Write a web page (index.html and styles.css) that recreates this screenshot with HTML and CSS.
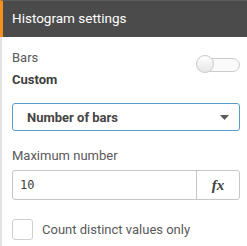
FILE: index.html
```html
<!DOCTYPE html>
<html>
<head>
<meta charset="utf-8">
<link rel="stylesheet" href="styles.css">
</head>
<body>
<div class="panel">
  <div class="header">Histogram settings</div>
  <div class="content">
    <div class="row-toggle">
      <div class="toggle-labels">
        <div class="label">Bars</div>
        <div class="value">Custom</div>
      </div>
      <div class="toggle">
        <div class="track"></div>
        <div class="knob"></div>
      </div>
    </div>
    <div class="select">
      <span class="select-text">Number of bars</span>
      <svg class="caret" width="9" height="5" viewBox="0 0 9 5"><path d="M0 0H9L4.5 5Z" fill="#595959"/></svg>
    </div>
    <div class="label max-label">Maximum number</div>
    <div class="input">
      <span class="input-text">10</span>
      <span class="fx">fx</span>
    </div>
    <div class="check-row">
      <span class="checkbox"></span>
      <span class="check-label">Count distinct values only</span>
    </div>
  </div>
</div>
</body>
</html>
```
FILE: styles.css
```css
html, body {
  margin: 0;
  padding: 0;
  background: #ffffff;
}
body {
  font-family: Roboto, "Noto Sans", sans-serif;
  width: 247px;
  height: 246px;
  overflow: hidden;
}
.panel {
  height: 246px;
  border-left: 2px solid #e3e3e3;
  box-sizing: border-box;
}
.header {
  margin-left: -2px;
  height: 37px;
  background: #4b4b4b;
  border-left: 3px solid #f4901e;
  border-top: 1px solid #5c5c5c;
  box-sizing: border-box;
  color: #ffffff;
  font-size: 13.5px;
  line-height: 34px;
  padding-left: 9px;
}
.content {
  padding: 12px 7px 0 10px;
}
.row-toggle {
  display: flex;
  justify-content: space-between;
  align-items: flex-start;
}
.label {
  font-size: 13px;
  color: #595959;
  line-height: 17px;
}
.value {
  font-size: 13px;
  font-weight: bold;
  color: #404040;
  line-height: 17px;
  margin-top: 5px;
}
.toggle {
  position: relative;
  width: 44px;
  height: 19px;
  margin-top: 6px;
}
.track {
  position: absolute;
  left: 8px;
  top: 3px;
  width: 34px;
  height: 12px;
  border: 1px solid #cccccc;
  border-radius: 7px;
  background: #fafafa;
}
.knob {
  position: absolute;
  left: 0;
  top: 0;
  width: 18px;
  height: 18px;
  border-radius: 50%;
  border: 1px solid #c8c8c8;
  box-sizing: border-box;
  background: linear-gradient(#ffffff, #e6e6e6);
}
.select {
  margin-top: 15px;
  height: 28px;
  border: 1px solid #5b9ccb;
  border-radius: 3px;
  box-sizing: border-box;
  display: flex;
  align-items: center;
  justify-content: space-between;
  padding: 0 10px 0 14px;
}
.select-text {
  font-size: 13px;
  font-weight: bold;
  color: #454545;
}
.max-label {
  margin-top: 16px;
}
.input {
  margin-top: 6px;
  height: 30px;
  border: 1px solid #c6c6c6;
  border-radius: 3px;
  box-sizing: border-box;
  display: flex;
  align-items: stretch;
}
.input-text {
  flex: 1;
  font-family: "DejaVu Sans Mono", monospace;
  font-size: 12px;
  color: #404040;
  line-height: 28px;
  padding-left: 7px;
}
.fx {
  width: 42px;
  border-left: 1px solid #c6c6c6;
  font-family: "Liberation Serif", serif;
  font-style: italic;
  font-weight: bold;
  font-size: 15px;
  color: #404040;
  text-align: center;
  line-height: 28px;
}
.check-row {
  margin-top: 19px;
  display: flex;
  align-items: center;
}
.checkbox {
  width: 21px;
  height: 21px;
  border: 1px solid #cfcfcf;
  border-radius: 3px;
  box-sizing: border-box;
}
.check-label {
  margin-left: 9px;
  font-size: 13px;
  color: #595959;
}
```
